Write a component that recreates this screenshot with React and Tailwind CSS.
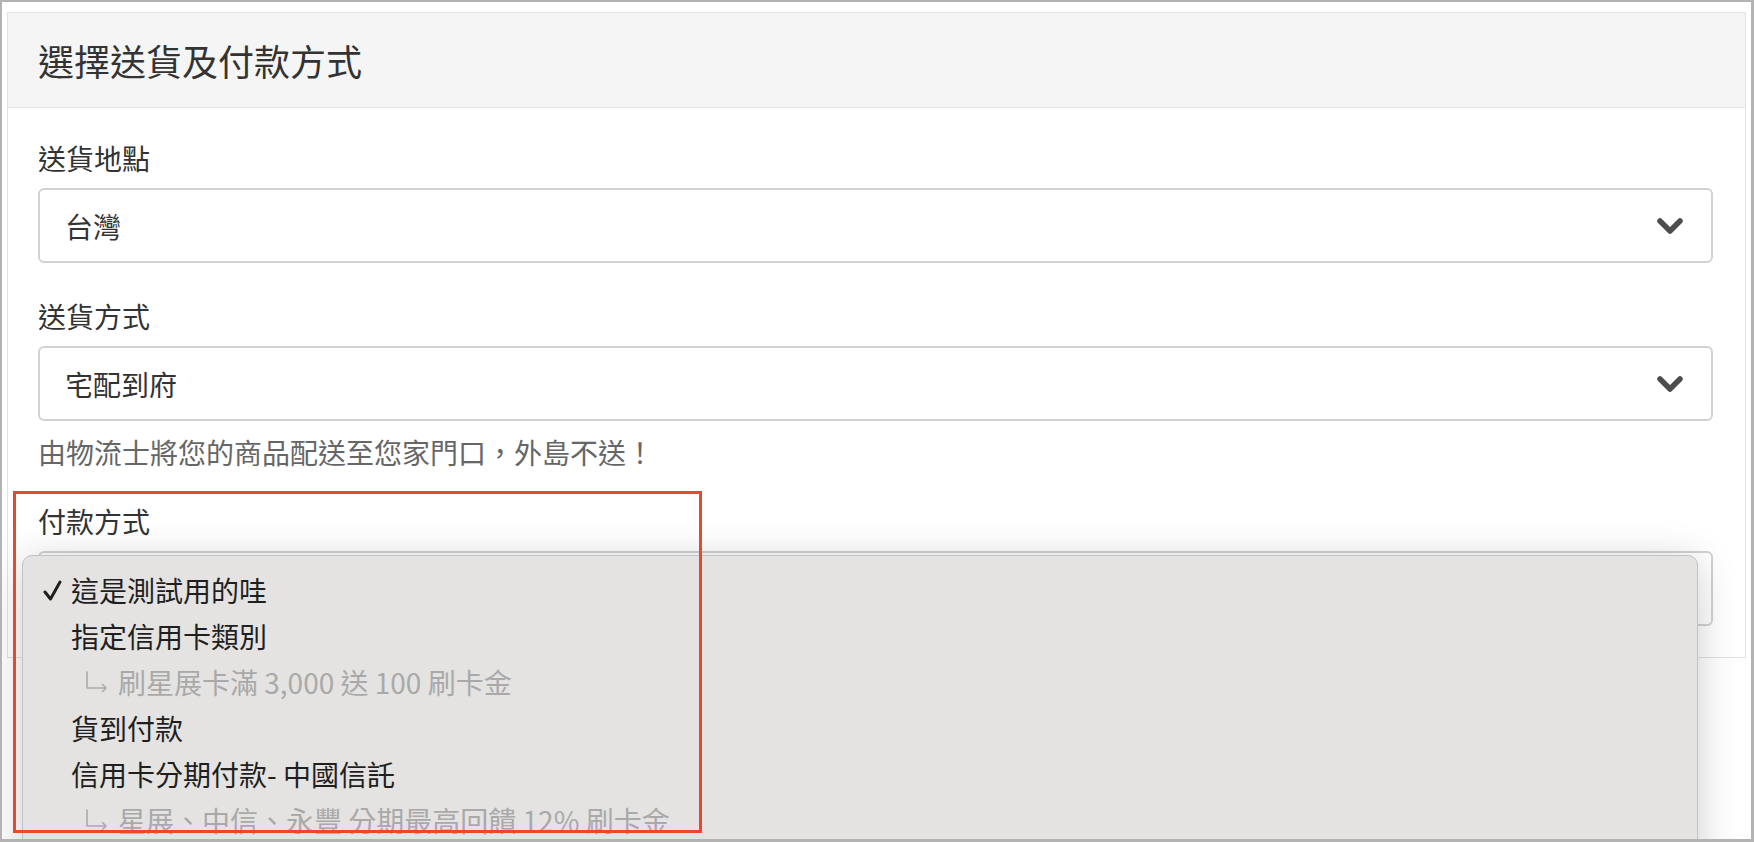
import React from 'react';

const shippingFields = [
  { label: '送貨地點', value: '台灣' },
  { label: '送貨方式', value: '宅配到府', help: '由物流士將您的商品配送至您家門口，外島不送！' },
];

const paymentOptions = [
  { label: '這是測試用的哇', checked: true },
  { label: '指定信用卡類別' },
  { label: '刷星展卡滿 3,000 送 100 刷卡金', sub: true },
  { label: '貨到付款' },
  { label: '信用卡分期付款- 中國信託' },
  { label: '星展、中信、永豐 分期最高回饋 12% 刷卡金', sub: true },
];

const Chevron = () => (
  <svg width="28" height="18" viewBox="0 0 28 18" className="shrink-0">
    <path
      d="M4 4 L14 14 L24 4"
      fill="none"
      stroke="#4d4d4d"
      strokeWidth="5.5"
      strokeLinecap="round"
      strokeLinejoin="round"
    />
  </svg>
);

const Check = () => (
  <svg width="19" height="21" viewBox="0 0 19 21">
    <path
      d="M2 12 L7.5 19 L17 2"
      fill="none"
      stroke="#1f1f1f"
      strokeWidth="3"
      strokeLinecap="round"
      strokeLinejoin="round"
    />
  </svg>
);

// 子選項前面的 ↳ 箭頭
const SubArrow = () => (
  <svg width="24" height="22" viewBox="0 0 24 22" className="shrink-0">
    <path
      d="M2 1 V17 H21 M17.5 13.5 L21 17 L17.5 20.5"
      fill="none"
      stroke="#ababab"
      strokeWidth="1.6"
      strokeLinecap="round"
      strokeLinejoin="round"
    />
  </svg>
);

const SelectBox = ({ value }) => (
  <div className="flex h-[75px] items-center justify-between rounded-[6px] border-2 border-[#d2d2d2] bg-white pl-[25px] pr-[27px]">
    <span className="text-[28px] leading-[40px] text-[#333]">{value}</span>
    <Chevron />
  </div>
);

const App = () => {
  return (
    <div className="relative h-[842px] w-full overflow-hidden border-2 border-r-[3px] border-b-[3px] border-[#b3b3b3] bg-white pl-[5px] pr-[5px] pt-[10px] font-['Noto_Sans_CJK_TC','Noto_Sans',sans-serif]">
      <div className="border border-[#e3e3e3] bg-white">
        <div className="flex h-[95px] items-center border-b border-[#e3e3e3] bg-[#f5f5f5] pl-[30px]">
          <h2 className="text-[36px] leading-[48px] text-[#333]">選擇送貨及付款方式</h2>
        </div>

        <div className="pl-[30px] pr-[32px] pt-[30px] pb-[31px]">
          {shippingFields.map((field, i) => (
            <div key={field.label} className={i > 0 ? 'mt-[33px]' : ''}>
              <div className="mb-[10px] text-[28px] leading-[40px] text-[#333]">{field.label}</div>
              <SelectBox value={field.value} />
              {field.help && (
                <p className="mt-[11px] text-[28px] leading-[40px] text-[#666]">{field.help}</p>
              )}
            </div>
          ))}

          <div className="mt-[29px]">
            <div className="mb-[10px] text-[28px] leading-[40px] text-[#333]">付款方式</div>
            {/* 選單展開時被蓋住，值顯示在下方選單內 */}
            <SelectBox value="" />
          </div>
        </div>
      </div>

      {/* 展開的付款方式選單 */}
      <div className="absolute left-[20px] top-[553px] h-[320px] w-[1676px] rounded-[10px] border border-[#c2c2c2] bg-[#e4e3e1] pt-[11px] shadow-[0_6px_40px_rgba(0,0,0,0.2)]">
        {paymentOptions.map((opt) => (
          <div key={opt.label} className="flex h-[46px] items-center pl-[20px]">
            <span className="flex w-[28px] shrink-0 items-center">{opt.checked && <Check />}</span>
            {opt.sub ? (
              <span className="flex items-center pl-[14px] text-[28px] leading-[40px] text-[#a9a9a9]">
                <SubArrow />
                <span className="ml-[9px]">{opt.label}</span>
              </span>
            ) : (
              <span className="text-[28px] leading-[40px] text-[#1f1f1f]">{opt.label}</span>
            )}
          </div>
        ))}
      </div>

      {/* 標註用紅框 */}
      <div className="pointer-events-none absolute left-[11px] top-[489px] h-[342px] w-[689px] border-[3px] border-[#e64a2e]" />
    </div>
  );
};

export default App;
